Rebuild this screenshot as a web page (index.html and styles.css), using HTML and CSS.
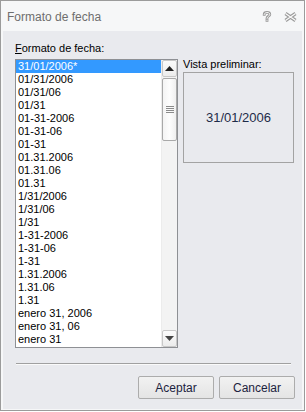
FILE: index.html
```html
<!DOCTYPE html>
<html lang="es">
<head>
<meta charset="utf-8">
<title>Formato de fecha</title>
<link rel="stylesheet" href="styles.css">
</head>
<body>
<div class="window">
  <div class="titlebar">
    <span class="title">Formato de fecha</span>
    <div class="tb-icons">
      <svg class="tb-help" width="10" height="11" viewBox="0 0 10 11">
        <path d="M2.2 3.4 C2.2 0.8 7.8 0.8 7.8 3.4 C7.8 5.2 5 5.2 5 7.2" fill="none" stroke="#9a9a9a" stroke-width="2.8" stroke-linecap="square"/>
        <rect x="3.6" y="8.3" width="2.8" height="2.5" fill="#9a9a9a"/>
        <path d="M2.2 3.4 C2.2 0.8 7.8 0.8 7.8 3.4 C7.8 5.2 5 5.2 5 7.2" fill="none" stroke="#fafafa" stroke-width="1" stroke-linecap="square"/>
        <rect x="4.5" y="9.1" width="1" height="1" fill="#fafafa"/>
      </svg>
      <svg class="tb-close" width="13" height="10" viewBox="0 0 13 10">
        <path d="M1.5 1.5 L11.5 8.5 M11.5 1.5 L1.5 8.5" fill="none" stroke="#9a9a9a" stroke-width="3.4"/>
        <path d="M1.5 1.5 L11.5 8.5 M11.5 1.5 L1.5 8.5" fill="none" stroke="#fafafa" stroke-width="1.3"/>
      </svg>
    </div>
  </div>
  <div class="panel">
    <div class="field-label"><span class="mnemonic">F</span>ormato de fecha:</div>
    <div class="main">
      <div class="listbox">
        <ul class="items">
          <li class="selected">31/01/2006*</li>
          <li>01/31/2006</li>
          <li>01/31/06</li>
          <li>01/31</li>
          <li>01-31-2006</li>
          <li>01-31-06</li>
          <li>01-31</li>
          <li>01.31.2006</li>
          <li>01.31.06</li>
          <li>01.31</li>
          <li>1/31/2006</li>
          <li>1/31/06</li>
          <li>1/31</li>
          <li>1-31-2006</li>
          <li>1-31-06</li>
          <li>1-31</li>
          <li>1.31.2006</li>
          <li>1.31.06</li>
          <li>1.31</li>
          <li>enero 31, 2006</li>
          <li>enero 31, 06</li>
          <li>enero 31</li>
        </ul>
        <div class="scrollbar">
          <div class="sb-btn">
            <svg width="9" height="5" viewBox="0 0 9 5"><path d="M0 5 L4.5 0 L9 5 Z" fill="#222"/></svg>
          </div>
          <div class="sb-thumb">
            <svg width="8" height="7" viewBox="0 0 8 7"><path d="M0 0.5 H8 M0 2.5 H8 M0 4.5 H8 M0 6.5 H8" stroke="#8a8a8a" stroke-width="1"/></svg>
          </div>
          <div class="sb-track"></div>
          <div class="sb-btn">
            <svg width="9" height="5" viewBox="0 0 9 5"><path d="M0 0 L9 0 L4.5 5 Z" fill="#444"/></svg>
          </div>
        </div>
      </div>
      <div class="preview-col">
        <div class="preview-label">Vista preliminar:</div>
        <div class="preview-box">31/01/2006</div>
      </div>
    </div>
    <div class="separator"></div>
    <div class="buttons">
      <button class="btn">Aceptar</button>
      <button class="btn">Cancelar</button>
    </div>
  </div>
</div>
</body>
</html>
```

FILE: styles.css
```css
* { box-sizing: border-box; }

html, body {
  margin: 0;
  padding: 0;
  background: #ffffff;
}

body {
  font-family: "Liberation Sans", Arial, sans-serif;
  font-size: 11px;
  color: #000;
}

.window {
  width: 305px;
  height: 411px;
  border: 1px solid #9b9b9b;
  background: #f6f7f8;
  display: flex;
  flex-direction: column;
}

.titlebar {
  height: 30px;
  flex: none;
  display: flex;
  align-items: center;
  padding-left: 6px;
  padding-right: 7px;
}

.title {
  font-size: 12px;
  color: #6e6e6e;
  flex: 1;
  padding-top: 1px;
}

.tb-icons {
  display: flex;
  align-items: center;
  gap: 12px;
  padding-top: 1px;
}

.panel {
  flex: 1;
  margin: 0 2px 1px 2px;
  background: #e9eaee;
  padding: 11px 7px 0 12px;
  display: flex;
  flex-direction: column;
}

.field-label {
  line-height: 13px;
  height: 13px;
  color: #000;
}

.mnemonic { text-decoration: underline; }

.main {
  margin-top: 4px;
  display: flex;
  gap: 5px;
}

.listbox {
  width: 163px;
  height: 289px;
  border: 1px solid #8e9094;
  background: #fff;
  display: flex;
}

.items {
  list-style: none;
  margin: 0;
  padding: 0;
  flex: 1;
}

.items li {
  height: 13px;
  line-height: 13px;
  padding-left: 2px;
  white-space: nowrap;
  color: #000;
}

.items li.selected {
  background: #3399ff;
  color: #fff;
}

.scrollbar {
  width: 16px;
  flex: none;
  display: flex;
  flex-direction: column;
  background: #f3f3f3;
  border-left: 1px solid #ececec;
}

.sb-btn {
  height: 17px;
  border: 1px solid #c8c8c8;
  border-radius: 2px;
  background: linear-gradient(#fbfbfb, #ececec);
  display: flex;
  align-items: center;
  justify-content: center;
}

.sb-thumb {
  height: 63px;
  margin-top: 1px;
  border: 1px solid #a9a9a9;
  border-radius: 2px;
  background: linear-gradient(90deg, #f4f4f4, #fdfdfd 50%, #efefef);
  display: flex;
  align-items: center;
  justify-content: center;
}

.sb-track {
  flex: 1;
}

.preview-col {
  margin-top: -1px;
  width: 111px;
  display: flex;
  flex-direction: column;
}

.preview-label {
  line-height: 13px;
  height: 13px;
  color: #000;
  white-space: nowrap;
}

.preview-box {
  margin-top: 1px;
  height: 91px;
  border: 1px solid #a3a3a3;
  display: flex;
  align-items: center;
  justify-content: center;
  font-size: 13px;
  color: #1e2b48;
}

.separator {
  margin: 15px 4px 0 1px;
  height: 2px;
  border-top: 1px solid #a0a0a0;
  border-bottom: 1px solid #fafafa;
}

.buttons {
  margin-top: 11px;
  display: flex;
  justify-content: flex-end;
  gap: 5px;
}

.btn {
  width: 76px;
  height: 23px;
  border: 1px solid #acacac;
  border-radius: 2px;
  background: linear-gradient(#f2f2f2, #e4e4e4);
  font-family: "Liberation Sans", Arial, sans-serif;
  font-size: 12px;
  color: #1c2340;
  padding: 0;
}
```
